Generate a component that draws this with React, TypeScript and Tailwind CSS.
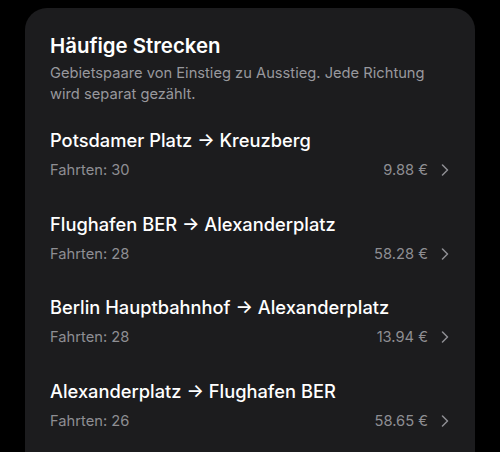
import React from "react";

const routes = [
  { from: "Potsdamer Platz", to: "Kreuzberg", trips: 30, price: "9.88 €" },
  { from: "Flughafen BER", to: "Alexanderplatz", trips: 28, price: "58.28 €" },
  { from: "Berlin Hauptbahnhof", to: "Alexanderplatz", trips: 28, price: "13.94 €" },
  { from: "Alexanderplatz", to: "Flughafen BER", trips: 26, price: "58.65 €" },
];

function Chevron() {
  return (
    <svg width="8" height="12" viewBox="0 0 8 12" fill="none" className="text-[#8e8e93]">
      <path d="M1.5 1L6.5 6L1.5 11" stroke="currentColor" strokeWidth="1.5" strokeLinecap="round" strokeLinejoin="round" />
    </svg>
  );
}

export default function App() {
  return (
    <div className="w-[500px] h-[452px] bg-black overflow-hidden pt-[8px] px-[25px]" style={{ fontFamily: "Inter, 'Noto Sans', sans-serif" }}>
      <div className="bg-[#1c1c1e] rounded-[22px] h-[470px] px-[25px] pt-[25px]">
        <h1 className="text-[20.4px] leading-[26px] font-semibold text-white">Häufige Strecken</h1>
        <p className="mt-[4px] text-[14.7px] leading-[21px] text-[#98989d]">
          Gebietspaare von Einstieg zu Ausstieg. Jede Richtung wird separat gezählt.
        </p>
        <div className="mt-[22px] flex flex-col">
          {routes.map((r, i) => (
            <div key={i} className="flex flex-col h-[83.7px]">
              <div className="text-[18.3px] leading-[26px] text-white font-medium">
                {r.from} → {r.to}
              </div>
              <div className="mt-[7px] flex items-center justify-between">
                <span className="text-[14.7px] leading-[20px] text-[#8e8e93]">Fahrten: {r.trips}</span>
                <span className="flex items-center gap-[13px] pr-[1px]">
                  <span className="text-[14.7px] leading-[20px] text-[#8e8e93]">{r.price}</span>
                  <Chevron />
                </span>
              </div>
            </div>
          ))}
        </div>
      </div>
    </div>
  );
}
